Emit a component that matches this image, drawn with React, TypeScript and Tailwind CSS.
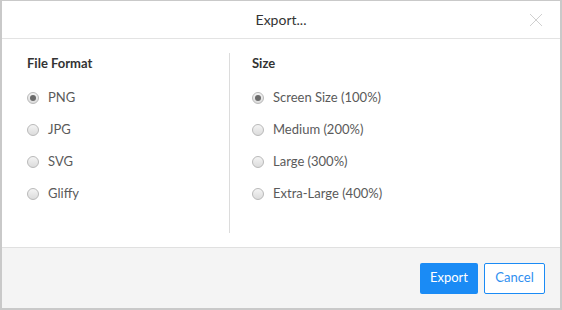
import { useState } from 'react';

const formats = ['PNG', 'JPG', 'SVG', 'Gliffy'];
const sizes = ['Screen Size (100%)', 'Medium (200%)', 'Large (300%)', 'Extra-Large (400%)'];

function Radio({ checked, label, onClick }: { checked: boolean; label: string; onClick: () => void }) {
  return (
    <button onClick={onClick} className="flex items-center gap-[9px] h-[20px] text-left">
      <span className="w-[12px] h-[12px] rounded-full border border-[#b9b9b9] bg-gradient-to-b from-[#f4f4f4] to-[#dcdcdc] flex items-center justify-center">
        {checked && <span className="w-[6px] h-[6px] rounded-full bg-[#6b6b6b]" />}
      </span>
      <span className="text-[13px] text-[#5a5a5a]">{label}</span>
    </button>
  );
}

export default function App() {
  const [format, setFormat] = useState('PNG');
  const [size, setSize] = useState(sizes[0]);

  return (
    <div className="w-[562px] h-[310px] bg-[#c9c9c9] pt-[1px] px-[2px] pb-[2px]" style={{ fontFamily: 'Lato, "Open Sans", sans-serif' }}>
      <div className="h-full bg-white flex flex-col">
        <div className="relative h-[38px] border-b border-[#e3e3e3] flex items-center justify-center">
          <span className="text-[14px] text-[#333]">Export...</span>
          <button className="absolute right-[17px] top-[12px] w-[14px] h-[14px]">
            <svg viewBox="0 0 14 14" width="14" height="14">
              <path d="M1 1L13 13M13 1L1 13" stroke="#d0d0d0" strokeWidth="1" />
            </svg>
          </button>
        </div>

        <div className="flex-1 flex pt-[14px] mb-[14px]">
          <div className="w-[228px] pl-[25px] border-r border-[#dcdcdc] flex flex-col">
            <div className="text-[13px] font-bold text-[#333] h-[20px] leading-[20px]">File Format</div>
            <div className="mt-[15px] flex flex-col gap-[12px]">
              {formats.map((f) => (
                <Radio key={f} label={f} checked={format === f} onClick={() => setFormat(f)} />
              ))}
            </div>
          </div>
          <div className="flex-1 pl-[22px] flex flex-col">
            <div className="text-[13px] font-bold text-[#333] h-[20px] leading-[20px]">Size</div>
            <div className="mt-[15px] flex flex-col gap-[12px]">
              {sizes.map((s) => (
                <Radio key={s} label={s} checked={size === s} onClick={() => setSize(s)} />
              ))}
            </div>
          </div>
        </div>

        <div className="h-[61px] bg-[#f4f4f4] border-t border-[#e0e0e0] flex items-center justify-end gap-[6px] pr-[15px]">
          <button className="h-[31px] w-[58px] rounded-[2px] bg-[#1a8bf5] text-white text-[13px]">Export</button>
          <button className="h-[31px] w-[61px] rounded-[2px] border border-[#1a8bf5] bg-white text-[#2f8ff0] text-[13px]">Cancel</button>
        </div>
      </div>
    </div>
  );
}
